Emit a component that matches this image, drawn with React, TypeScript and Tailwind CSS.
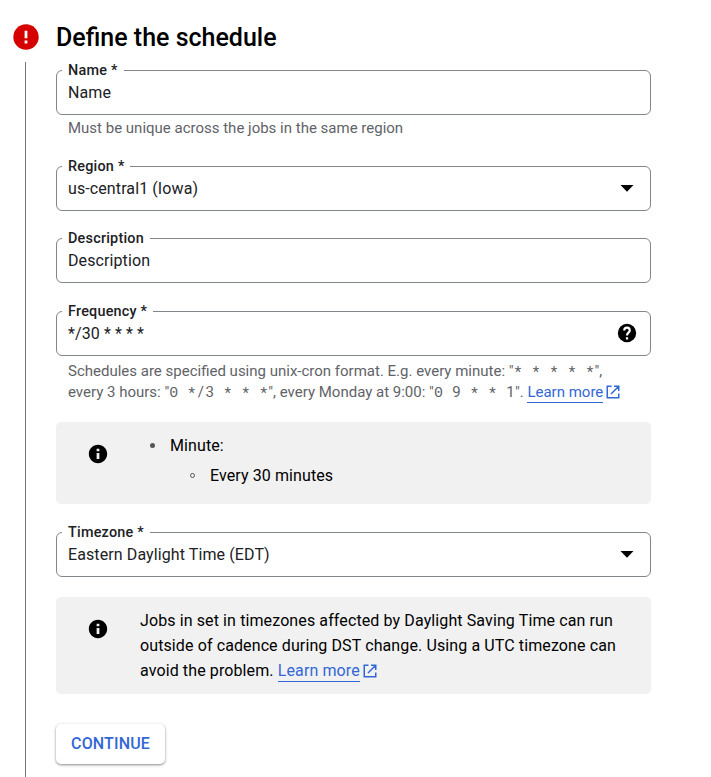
import type { ReactNode } from "react";

function Field({ label, value, icon }: { label: string; value: string; icon?: ReactNode }) {
  return (
    <fieldset className="h-[45px] w-full rounded-[6px] border border-[#80868b]">
      <legend className="ml-[5px] h-px px-1.5 text-[14.4px] leading-[1px] font-medium tracking-[0.22px] whitespace-nowrap text-[#202124]">
        {label}
      </legend>
      <div className="flex h-[43px] items-center justify-between pr-[12.5px] pl-[11px] text-[16px] tracking-[0.1px] text-[#202124]">
        <span>{value}</span>
        {icon}
      </div>
    </fieldset>
  );
}

function Arrow() {
  return (
    <svg className="mb-px size-[22px]" viewBox="0 0 22 22">
      <path d="M4.5 8h13L11 14.7z" fill="#000" />
    </svg>
  );
}

function Help() {
  return (
    <svg className="mb-0.5 size-[22px]" viewBox="0 0 24 24">
      <circle cx="12" cy="12" r="10" fill="#000" />
      <path
        fill="none"
        stroke="#fff"
        strokeWidth="2.4"
        d="M9 9.2c0-1.7 1.3-3 3-3s3 1.3 3 3c0 2.2-3 2.6-3 5.6M12 16.6v2.4"
      />
    </svg>
  );
}

function Info() {
  return (
    <svg className="size-[22px] shrink-0" viewBox="0 0 24 24">
      <path fill="#000" d="M12 2C6.48 2 2 6.48 2 12s4.48 10 10 10 10-4.48 10-10S17.52 2 12 2zm1.5 15.5h-3V11h3v6.5zm0-8.5h-3V6.3h3V9z" />
    </svg>
  );
}

function LearnMore() {
  return (
    <a className="whitespace-nowrap text-[#3367d6]">
      <span className="border-b border-[#3367d6] pb-px">Learn more</span>
      <svg className="ml-[3px] inline-block size-[14px] align-[-2px]" viewBox="0 0 14 14" fill="none" stroke="currentColor" strokeWidth="1.5">
        <path d="M5.5 1.25H1.25v11.5h11.5V8.5M8 1.25h4.75V6M12.5 1.5L5 9" />
      </svg>
    </a>
  );
}

/** Cron expression set in fixed-width cells. */
function Code({ children }: { children: string }) {
  return (
    <span className="text-[15px] tracking-normal whitespace-pre">
      {children.split("").map((char, i) => (
        <span
          key={i}
          className={
            char === "0"
              ? "font-['Liberation_Mono',monospace]"
              : char === "*"
                ? "relative top-px inline-block w-[9px] text-center leading-none"
                : "inline-block w-[9px] text-center leading-none"
          }
        >
          {char}
        </span>
      ))}
    </span>
  );
}

export default function App() {
  return (
    <main className="flex h-[777px] w-[711px] overflow-hidden bg-white font-[Roboto,sans-serif] text-black">
      <div className="ml-[13px] flex w-[43px] shrink-0 flex-col pt-6">
        <svg className="size-[26px]" viewBox="0 0 26 26">
          <circle cx="13" cy="13" r="12.7" fill="#d50000" />
          <path d="M11.6 6.7h2.8v7.6h-2.8zM11.6 16.6h2.8v2.8h-2.8z" fill="#fff" />
        </svg>
        <div className="mt-3 ml-3 w-px flex-1 bg-[#757575]" />
      </div>
      <div className="w-[595px]">
        <h1 className="mt-5 h-[50px] text-[25px] leading-[35px] font-medium">Define the schedule</h1>
        <Field label="Name *" value="Name" />
        <p className="mt-[3px] h-12 pl-3 text-[15px] leading-[21px] text-[#5f6368]">Must be unique across the jobs in the same region</p>
        <Field label="Region *" value="us-central1 (Iowa)" icon={<Arrow />} />
        <div className="h-[27px]" />
        <Field label="Description" value="Description" />
        <div className="h-7" />
        <Field label="Frequency *" value="*/30 * * * *" icon={<Help />} />
        <div className="h-[66px] pt-[5px] pl-3 text-[15px] leading-[21px] whitespace-nowrap text-[#5f6368]">
          <p className="h-[21px]">Schedules are specified using unix-cron format. E.g. every minute: "<Code>* * * * *</Code>",</p>
          <p className="h-[21px]">every 3 hours: "<Code>0 */3 * * *</Code>", every Monday at 9:00: "<Code>0 9 * * 1</Code>". <LearnMore /></p>
        </div>
        <section className="flex h-[82px] rounded-[5px] bg-[#f1f1f1] pt-[11px] pl-[31.4px]">
          <div className="w-[52.6px] pt-[10px]"><Info /></div>
          <ul className="pt-px text-[16px] leading-[24px] tracking-[0.1px]">
            <li className="flex h-[30px]">
              <span className="mt-[9px] mr-[15px] ml-[10px] size-[5px] rounded-full bg-[#555]" />
              Minute:
            </li>
            <li className="ml-10 flex">
              <span className="mt-[9px] mr-[15px] ml-[10px] size-[5px] rounded-full border border-[#555]" />
              Every 30 minutes
            </li>
          </ul>
        </section>
        <div className="h-7" />
        <Field label="Timezone *" value="Eastern Daylight Time (EDT)" icon={<Arrow />} />
        <section className="mt-5 flex h-[97px] rounded-[5px] bg-[#f1f1f1] pt-[11px] pl-[31.4px]">
          <div className="w-[52.6px] pt-[10px]"><Info /></div>
          <div className="text-[16px] leading-[25px] tracking-[0.11px] whitespace-nowrap">
            <p>Jobs in set in timezones affected by Daylight Saving Time can run</p>
            <p>outside of cadence during DST change. Using a UTC timezone can</p>
            <p>avoid the problem. <LearnMore /></p>
          </div>
        </section>
        <button className="mt-[30px] h-10 w-[109px] rounded-[5px] bg-white text-[16px] font-medium tracking-[0.15px] text-[#3367d6] shadow-[0_1px_3px_rgba(0,0,0,0.35),0_1px_2px_rgba(0,0,0,0.15)]">CONTINUE</button>
      </div>
    </main>
  );
}
